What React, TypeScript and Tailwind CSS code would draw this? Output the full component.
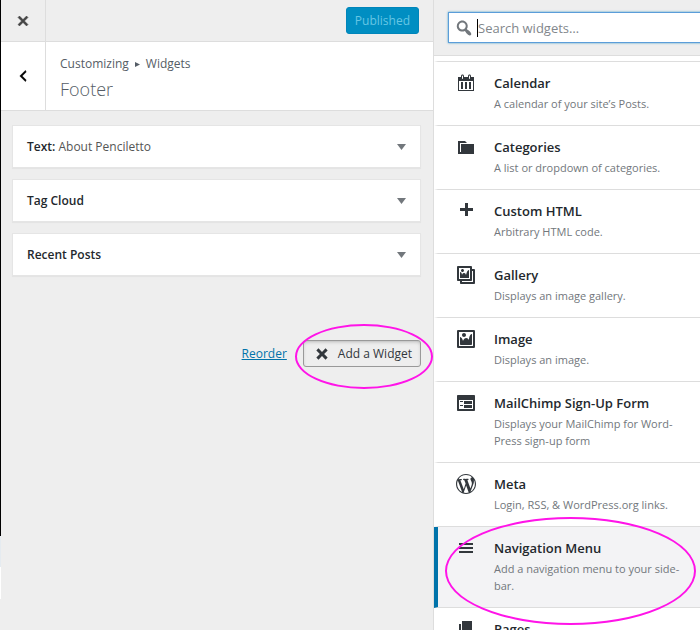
import type { ReactNode } from 'react';

type AvailableWidget = {
  name: string;
  description: string;
  icon: string;
  selected?: boolean;
};

const icons = {
  close: 'M14.95 6.46L11.41 10l3.54 3.54-1.41 1.41L10 11.42l-3.53 3.53-1.42-1.42L8.58 10 5.05 6.47l1.42-1.42L10 8.58l3.54-3.53z',
  no: 'M12.12 10l3.53 3.53-2.12 2.12L10 12.12l-3.54 3.54-2.12-2.12L7.88 10 4.34 6.46l2.12-2.12L10 7.88l3.54-3.53 2.12 2.12z',
  back: 'M14 5l-5 5 5 5-1 2-7-7 7-7z',
  search: 'M12.14 4.18c1.87 1.87 2.11 4.75.72 6.89.12.1.22.21.36.31.2.16.47.36.81.59.34.24.56.39.66.47.42.31.73.57.94.78.32.32.6.65.84 1 .25.35.44.69.59 1.04.14.35.21.68.18 1-.02.32-.14.59-.36.81s-.49.34-.81.36c-.31.02-.65-.04-.99-.19-.35-.14-.7-.34-1.04-.59-.35-.24-.68-.52-1-.84-.21-.21-.47-.52-.77-.93-.1-.13-.25-.35-.47-.66-.22-.32-.4-.57-.56-.78-.16-.2-.29-.35-.44-.5-2.07 1.09-4.69.76-6.44-.98-2.14-2.15-2.14-5.64 0-7.78 2.15-2.15 5.63-2.15 7.78 0zm-1.41 6.36c1.36-1.37 1.36-3.58 0-4.95-1.37-1.37-3.59-1.37-4.95 0-1.37 1.37-1.37 3.58 0 4.95 1.36 1.37 3.58 1.37 4.95 0z',
  calendar: 'M15 4h3v14H2V4h3V3c0-.83.67-1.5 1.5-1.5S8 2.17 8 3v1h4V3c0-.83.67-1.5 1.5-1.5S15 2.17 15 3v1zM6 3v2.5c0 .28.22.5.5.5s.5-.22.5-.5V3c0-.28-.22-.5-.5-.5S6 2.72 6 3zm7 0v2.5c0 .28.22.5.5.5s.5-.22.5-.5V3c0-.28-.22-.5-.5-.5s-.5.22-.5.5zm4 14V8H3v9h14zM7 16V9H5v7h2zm4 0V9H9v7h2zm4 0V9h-2v7h2z',
  category: 'M5 7h13v10H2V4h7l2 2H4v9h1V7z',
  plus: 'M17 7v3h-5v5H9v-5H4V7h5V2h3v5h5z',
  gallery: 'M16 4h1.96c.57 0 1.04.47 1.04 1.04v12.92c0 .57-.47 1.04-1.04 1.04H5.04C4.47 19 4 18.53 4 17.96V16H2.04C1.47 16 1 15.53 1 14.96V2.04C1 1.47 1.47 1 2.04 1h12.92c.57 0 1.04.47 1.04 1.04V4zM3 14h11V3H3v11zm5-8.5C8 4.67 7.33 4 6.5 4S5 4.67 5 5.5 5.67 7 6.5 7 8 6.33 8 5.5zm2 4.5s1-5 3-5v8H4V7c2 0 2 3 2 3s.33-2 2-2 2 2 2 2zm7 7V6h-1v8.96c0 .57-.47 1.04-1.04 1.04H6v1h11z',
  image: 'M2.25 1h15.5c.69 0 1.25.56 1.25 1.25v15.5c0 .69-.56 1.25-1.25 1.25H2.25C1.56 19 1 18.44 1 17.75V2.25C1 1.56 1.56 1 2.25 1zM17 17V3H3v14h14zM10 6c0-1.1-.9-2-2-2s-2 .9-2 2 .9 2 2 2 2-.9 2-2zm3 5s0-6 3-6v10c0 .55-.45 1-1 1H5c-.55 0-1-.45-1-1V8c2 0 3 4 3 4s1-3 3-3 3 2 3 2z',
  feedback: 'M2 2h16c.55 0 1 .45 1 1v14c0 .55-.45 1-1 1H2c-.55 0-1-.45-1-1V3c0-.55.45-1 1-1zm15 14V7H3v9h14zM4 8v1h3V8H4zm4 0v3h8V8H8zm-4 4v1h3v-1H4zm4 0v3h8v-3H8z',
  wordpress: 'M20 10c0-5.51-4.49-10-10-10C4.48 0 0 4.49 0 10c0 5.52 4.48 10 10 10 5.51 0 10-4.48 10-10zM7.78 15.37L4.37 6.22c.55-.02 1.17-.08 1.17-.08.5-.06.44-1.13-.06-1.11 0 0-1.45.11-2.37.11-.18 0-.37 0-.58-.01C4.12 2.69 6.87 1.11 10 1.11c2.33 0 4.45.87 6.05 2.34-.68-.11-1.65.39-1.65 1.58 0 .74.45 1.36.9 2.1.35.61.55 1.36.55 2.46 0 1.49-1.4 5-1.4 5l-3.03-8.37c.54-.02.82-.17.82-.17.5-.05.44-1.25-.06-1.22 0 0-1.44.12-2.38.12-.87 0-2.33-.12-2.33-.12-.5-.03-.56 1.2-.06 1.22l.92.08 1.26 3.41zM17.41 10c.24-.64.74-1.87.43-4.25.7 1.29 1.05 2.71 1.05 4.25 0 3.29-1.73 6.24-4.4 7.78.97-2.59 1.94-5.2 2.92-7.78zM6.1 18.09C3.12 16.65 1.11 13.53 1.11 10c0-1.3.23-2.48.72-3.59C3.25 10.3 4.67 14.2 6.1 18.09zm4.03-6.63l2.58 6.98c-.86.29-1.76.45-2.71.45-.79 0-1.57-.11-2.29-.33.81-2.38 1.62-4.74 2.42-7.1z',
  menu: 'M17 7V5H3v2h14zm0 4V9H3v2h14zm0 4v-2H3v2h14z',
  page: 'M6 15V2h10v13H6zm-1 1h8v2H3V5h2v11z',
};

const placedWidgets = [
  { name: 'Text', title: 'About Penciletto' },
  { name: 'Tag Cloud' },
  { name: 'Recent Posts' },
];

// \u00AD marks where a long word may be hyphenated
const availableWidgets: AvailableWidget[] = [
  { name: 'Calendar', description: 'A calendar of your site’s Posts.', icon: icons.calendar },
  { name: 'Categories', description: 'A list or dropdown of categories.', icon: icons.category },
  { name: 'Custom HTML', description: 'Arbitrary HTML code.', icon: icons.plus },
  { name: 'Gallery', description: 'Displays an image gallery.', icon: icons.gallery },
  { name: 'Image', description: 'Displays an image.', icon: icons.image },
  { name: 'MailChimp Sign-Up Form', description: 'Displays your MailChimp for Word\u00ADPress sign-up form', icon: icons.feedback },
  { name: 'Meta', description: 'Login, RSS, & WordPress.org links.', icon: icons.wordpress },
  { name: 'Navigation Menu', description: 'Add a navigation menu to your side\u00ADbar.', icon: icons.menu, selected: true },
  { name: 'Pages', description: 'A list of your site’s Pages.', icon: icons.page },
];

const Icon = ({ path, className = 'size-5' }: { path: string; className?: string }) => (
  <svg viewBox="0 0 20 20" fill="currentColor" aria-hidden="true" className={`shrink-0 ${className}`}>
    <path d={path} />
  </svg>
);

const Ring = ({ className }: { className: string }) => (
  <span aria-hidden="true" className={`pointer-events-none absolute z-10 rounded-[50%] border-2 border-[#ff14e8] ${className}`} />
);

const Panel = ({ name, children }: { name: string; children?: ReactNode }) => (
  <li>
    <button
      type="button"
      aria-label={name}
      className="flex h-[43px] w-full items-center justify-between border border-[#e5e5e5] bg-white px-3.5 text-left text-[12px] font-semibold text-[#23282d] shadow-[0_1px_1px_rgba(0,0,0,0.04)]"
    >
      <span>{children}</span>
      <svg viewBox="0 0 9 6" aria-hidden="true" className="h-1.5 w-[9px] fill-[#72777c]">
        <path d="M0 0h9L4.5 6z" />
      </svg>
    </button>
  </li>
);

const Controls = () => (
  <section className="flex min-w-0 flex-1 flex-col border-r border-[#ddd] bg-[#eee]">
    <header className="flex h-[42px] items-center border-b border-[#ddd]">
      <button type="button" aria-label="Close" className="flex h-full w-[45px] items-center justify-center border-r border-[#ddd] text-[#444]">
        <Icon path={icons.close} className="size-5 stroke-current stroke-[0.6]" />
      </button>
      <button
        type="button"
        disabled
        className="mr-3.5 ml-auto h-[27px] rounded-[3px] border border-[#0085ba] bg-[#008ec2] px-2 text-[12px] text-[#66c6e4]"
      >
        Published
      </button>
    </header>

    <div className="flex h-[69px] border-b border-[#ddd] bg-white">
      <button type="button" aria-label="Back" className="flex w-[45px] items-center justify-center border-r border-[#ddd] text-black">
        <Icon path={icons.back} className="size-4 stroke-current stroke-[0.6]" />
      </button>
      <div className="flex flex-col pt-3 pl-3.5 text-[#555d66]">
        <p className="flex items-center text-[12px] leading-5">
          Customizing
          <svg viewBox="0 0 5 5" aria-hidden="true" className="mx-1.5 size-[5px] fill-current">
            <path d="M0 0l5 2.5L0 5z" />
          </svg>
          Widgets
        </p>
        <h1 className="text-lg leading-[30px] font-light">Footer</h1>
      </div>
    </div>

    <ul className="flex flex-col gap-[11px] pt-3.5 pr-3 pl-[11px]">
      {placedWidgets.map((widget) => (
        <Panel key={widget.name} name={widget.name}>
          {widget.name}
          {widget.title ? (
            <>
              : <span className="font-normal text-[#555]">{widget.title}</span>
            </>
          ) : null}
        </Panel>
      ))}
    </ul>

    <div className="mt-16 flex items-center justify-end gap-4 pr-3">
      <a href="#reorder" className="text-[12px] text-[#0073aa] underline">Reorder</a>
      <div className="relative">
        <button
          type="button"
          className="flex h-[27px] items-center gap-1.5 rounded-[3px] border border-[#999] bg-[#eee] px-2 text-[12px] text-[#32373c] shadow-[inset_0_2px_5px_-3px_rgba(0,0,0,0.5)]"
        >
          <Icon path={icons.no} />
          Add a Widget
        </button>
        <Ring className="-top-4 -right-3 -bottom-[22px] -left-2" />
      </div>
    </div>
  </section>
);

const WidgetItem = ({ widget }: { widget: AvailableWidget }) => (
  <li className="relative">
    <button
      type="button"
      className={`flex w-full items-start border-b border-l-4 border-b-[#ddd] pt-[11px] pr-4 pb-[13px] pl-[18px] text-left ${
        widget.selected ? 'border-l-[#0073aa] bg-[#f3f3f5]' : 'border-l-transparent bg-white'
      }`}
    >
      <span className="mr-[18px] text-[#32373c]">
        <Icon path={widget.icon} />
      </span>
      <span className="flex flex-col gap-px">
        <span className="text-[13px] leading-[21px] font-semibold text-[#23282d]">{widget.name}</span>
        <span className="text-[11px] leading-[17px] text-[#72777c]">{widget.description}</span>
      </span>
    </button>
    {widget.selected && <Ring className="-top-2.5 right-1 -bottom-[17px] left-[11px]" />}
  </li>
);

const AvailableWidgets = () => (
  <section className="min-w-0 flex-1 bg-white">
    <header className="h-14 border-b border-[#ddd] bg-[#eee] pt-3 pl-3.5">
      <label className="-mr-2 flex h-[31px] items-center border border-[#5b9dd9] bg-white pl-[5px] shadow-[0_0_2px_rgba(30,140,190,0.8)]">
        <span className="sr-only">Search widgets</span>
        <span className="mr-[3px] text-[#72777c]">
          <Icon path={icons.search} />
        </span>
        <span aria-hidden="true" className="h-[18px] w-px bg-black" />
        <input
          type="text"
          placeholder="Search widgets…"
          className="h-full min-w-0 flex-1 bg-transparent text-[13px] text-[#32373c] outline-none placeholder:text-[#82878c]"
        />
      </label>
    </header>
    <div className="h-1.5 border-b border-l-4 border-b-[#ddd] border-l-transparent" />
    <ul>
      {availableWidgets.map((widget) => (
        <WidgetItem key={widget.name} widget={widget} />
      ))}
    </ul>
  </section>
);

export default function App() {
  return (
    <main className="flex h-screen overflow-hidden bg-[#eee] font-['Open_Sans','Noto_Sans',sans-serif]">
      <div className="flex w-[62%] shrink-0">
        {/* sliver of the page behind the customizer */}
        <div aria-hidden="true" className="flex w-px shrink-0 flex-col">
          <div className="h-[85%] bg-black" />
          <div className="h-[5%] bg-[#e5ebf0]" />
          <div className="h-[5%] bg-white" />
        </div>
        <Controls />
      </div>
      <AvailableWidgets />
    </main>
  );
}
